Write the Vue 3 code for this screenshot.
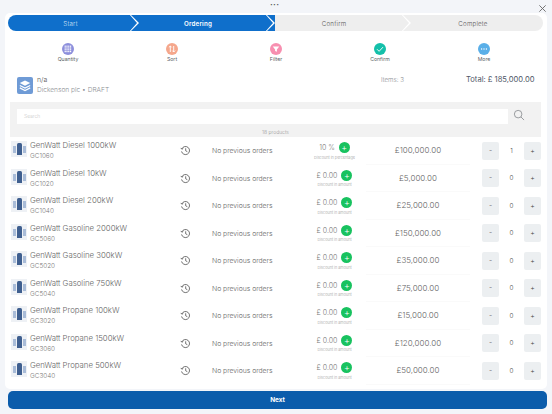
<script setup>
// --- Data ---
const steps = [
  { label: 'Start', state: 'done' },
  { label: 'Ordering', state: 'active' },
  { label: 'Confirm', state: 'todo' },
  { label: 'Complete', state: 'todo' },
]

const tools = [
  { label: 'Quantity', color: '#8d8fdc', icon: 'grid' },
  { label: 'Sort', color: '#f5a78c', icon: 'sort' },
  { label: 'Filter', color: '#f78fb0', icon: 'filter' },
  { label: 'Confirm', color: '#14c0aa', icon: 'check' },
  { label: 'More', color: '#5aafe8', icon: 'more' },
]

const products = [
  { name: 'GenWatt Diesel 1000kW', code: 'GC1060', discount: '10 %', note: 'Discount in percentage', price: '£100,000.00', qty: 1 },
  { name: 'GenWatt Diesel 10kW', code: 'GC1020', discount: '£ 0.00', note: 'Discount in amount', price: '£5,000.00', qty: 0 },
  { name: 'GenWatt Diesel 200kW', code: 'GC1040', discount: '£ 0.00', note: 'Discount in amount', price: '£25,000.00', qty: 0 },
  { name: 'GenWatt Gasoline 2000kW', code: 'GC5060', discount: '£ 0.00', note: 'Discount in amount', price: '£150,000.00', qty: 0 },
  { name: 'GenWatt Gasoline 300kW', code: 'GC5020', discount: '£ 0.00', note: 'Discount in amount', price: '£35,000.00', qty: 0 },
  { name: 'GenWatt Gasoline 750kW', code: 'GC5040', discount: '£ 0.00', note: 'Discount in amount', price: '£75,000.00', qty: 0 },
  { name: 'GenWatt Propane 100kW', code: 'GC3020', discount: '£ 0.00', note: 'Discount in amount', price: '£15,000.00', qty: 0 },
  { name: 'GenWatt Propane 1500kW', code: 'GC3060', discount: '£ 0.00', note: 'Discount in amount', price: '£120,000.00', qty: 0 },
  { name: 'GenWatt Propane 500kW', code: 'GC3040', discount: '£ 0.00', note: 'Discount in amount', price: '£50,000.00', qty: 0 },
]
</script>

<template>
  <div class="page">
    <div class="topbar">
      <span class="dots">•••</span>
      <svg class="close" viewBox="0 0 10 10"><path d="M1.5 1.5l7 7M8.5 1.5l-7 7" /></svg>
    </div>

    <div class="sheet">
      <!-- Stepper -->
      <div class="stepper">
        <div v-for="step in steps" :key="step.label" :class="['step', step.state]">
          {{ step.label }}
        </div>
      </div>

      <!-- Toolbar -->
      <div class="toolbar">
        <div v-for="tool in tools" :key="tool.label" class="tool">
          <span class="tool-icon" :style="{ background: tool.color }">
            <svg viewBox="0 0 12 12">
              <g v-if="tool.icon === 'grid'" fill="#fff">
                <rect v-for="n in 16" :key="n" :x="2.6 + ((n - 1) % 4) * 1.8" :y="2.6 + Math.floor((n - 1) / 4) * 1.8" width="1.2" height="1.2" />
              </g>
              <path v-else-if="tool.icon === 'sort'" d="M4.3 9V3M2.9 4.4l1.4-1.4 1.4 1.4M7.7 3v6M6.3 7.6l1.4 1.4 1.4-1.4" fill="none" stroke="#fff" stroke-width="0.9" />
              <path v-else-if="tool.icon === 'filter'" d="M2.8 3.6h6.4L6.9 6.4v2.4l-1.8-.8V6.4z" fill="#fff" />
              <path v-else-if="tool.icon === 'check'" d="M3 6.2l2.1 2.1L9 4.1" fill="none" stroke="#fff" stroke-width="0.9" />
              <g v-else fill="#fff">
                <circle cx="3.6" cy="6" r="0.7" />
                <circle cx="6" cy="6" r="0.7" />
                <circle cx="8.4" cy="6" r="0.7" />
              </g>
            </svg>
          </span>
          <span class="tool-label">{{ tool.label }}</span>
        </div>
      </div>

      <!-- Order header -->
      <div class="order">
        <span class="order-icon">
          <svg viewBox="0 0 16 16">
            <path d="M8 3l5.2 2.6L8 8.2 2.8 5.6z" fill="#fff" />
            <path d="M2.8 8L8 10.6 13.2 8M2.8 10.4L8 13l5.2-2.6" fill="none" stroke="#fff" stroke-width="1.2" />
          </svg>
        </span>
        <div class="order-text">
          <div class="order-name">n/a</div>
          <div class="order-sub">Dickenson plc • DRAFT</div>
        </div>
        <div class="order-items">Items: 3</div>
        <div class="order-total">Total: £ 185,000.00</div>
      </div>

      <!-- Search -->
      <div class="search-band">
        <div class="search-row">
          <div class="search-input">Search</div>
          <svg class="search-icon" viewBox="0 0 14 14">
            <circle cx="6" cy="6" r="4.4" />
            <path d="M9.3 9.3l3.6 3.6" />
          </svg>
        </div>
        <div class="count">18 products</div>
      </div>

      <!-- Products -->
      <div class="list">
        <div v-for="product in products" :key="product.code" class="row">
          <div class="thumb">
            <i class="unit side"></i>
            <i class="unit main"></i>
            <i class="unit side"></i>
          </div>
          <div class="product">
            <div class="product-name">{{ product.name }}</div>
            <div class="product-code">{{ product.code }}</div>
          </div>
          <svg class="history" viewBox="0 0 12 12">
            <path d="M2 4.2A4.4 4.4 0 1 1 1.7 7" />
            <path d="M.9 3.2L2 4.6l1.5-.8" />
            <path d="M6.2 3.6v2.7l1.8 1" />
          </svg>
          <div class="previous">No previous orders</div>
          <div class="discount">
            <div class="discount-top">
              <span class="discount-value">{{ product.discount }}</span>
              <span class="discount-add">+</span>
            </div>
            <div class="discount-note">{{ product.note }}</div>
          </div>
          <div class="price">{{ product.price }}</div>
          <div class="qty">
            <span class="qty-btn">-</span>
            <span class="qty-value">{{ product.qty }}</span>
            <span class="qty-btn">+</span>
          </div>
        </div>
      </div>
    </div>

    <button class="next">Next</button>
  </div>
</template>

<style>
html,
body {
  margin: 0;
  background: #f3f5f9;
}
</style>

<style scoped>
/* --- Page --- */
.page {
  width: 552px;
  height: 414px;
  overflow: hidden;
  background: #f3f5f9;
  font-family: Inter, 'Liberation Sans', sans-serif;
  font-weight: 300;
  color: #5b5f66;
  position: relative;
}

.topbar {
  height: 13px;
  position: relative;
}

.dots {
  position: absolute;
  left: 270px;
  top: 1px;
  font-size: 5px;
  letter-spacing: 0.3px;
  color: #555;
}

.close {
  position: absolute;
  left: 538px;
  top: 4px;
  width: 9px;
  height: 9px;
  fill: none;
  stroke: #666;
  stroke-width: 1;
}

.sheet {
  margin-left: 5px;
  width: 542px;
  height: 376px;
  background: #fff;
  border-radius: 5px;
  padding-top: 2px;
  box-sizing: border-box;
}

/* --- Stepper --- */
.stepper {
  display: flex;
  width: 535px;
  height: 16px;
  margin-left: 3px;
  border-radius: 8px;
  overflow: hidden;
}

.step {
  display: flex;
  align-items: center;
  justify-content: center;
  position: relative;
  box-sizing: border-box;
  font-size: 6.2px;
  letter-spacing: 0.2px;
  color: #555;
  background: #eeeeee;
}

.step:nth-child(1) {
  width: 131px;
  padding-right: 6px;
}

.step:nth-child(2),
.step:nth-child(3) {
  width: 136px;
  padding-right: 18px;
}

.step:nth-child(4) {
  width: 132px;
  padding-right: 8px;
}

.step.done,
.step.active {
  background: #0f6fcb;
  color: #cfe2f5;
}

.step.active {
  color: #fff;
  font-weight: 600;
}

.step:not(:last-child)::after {
  content: '';
  position: absolute;
  z-index: 1;
  right: 0;
  top: -1px;
  width: 10px;
  height: 18px;
  background: #fff;
  clip-path: polygon(0 0, 10% 0, 100% 50%, 10% 100%, 0 100%, 80% 50%);
}

/* --- Toolbar --- */
.toolbar {
  display: grid;
  grid-template-columns: repeat(5, 104px);
  margin: 12px 0 0 11px;
  height: 26px;
}

.tool {
  display: flex;
  flex-direction: column;
  align-items: center;
}

.tool-icon {
  width: 12px;
  height: 12px;
  border-radius: 50%;
  display: block;
}

.tool-icon svg {
  display: block;
  width: 12px;
  height: 12px;
}

.tool-label {
  margin-top: 1px;
  font-size: 5.2px;
  font-weight: 400;
  line-height: 6px;
}

/* --- Order header --- */
.order {
  display: flex;
  align-items: flex-start;
  height: 33px;
  padding-left: 12px;
}

.order-icon {
  width: 16px;
  height: 17px;
  margin-top: 8px;
  border-radius: 2px;
  background: #6f9bd6;
}

.order-icon svg {
  display: block;
  width: 16px;
  height: 17px;
}

.order-text {
  margin: 6px 0 0 4px;
  width: 344px;
}

.order-name {
  font-size: 7px;
  line-height: 10px;
  color: #555;
}

.order-sub {
  font-size: 6.6px;
  line-height: 10px;
  color: #8a8d92;
}

.order-items {
  margin-top: 6px;
  width: 85px;
  font-size: 6.2px;
  line-height: 10px;
  color: #8a8d92;
}

.order-total {
  margin-top: 6px;
  font-size: 7.6px;
  font-weight: 400;
  line-height: 10px;
  color: #4f5867;
}

/* --- Search --- */
.search-band {
  margin-left: 5px;
  width: 531px;
  height: 35px;
  background: #f2f2f2;
}

.search-row {
  display: flex;
  align-items: center;
  height: 25px;
  padding-left: 7px;
}

.search-input {
  width: 491px;
  height: 15px;
  margin-top: 3px;
  padding-left: 7px;
  box-sizing: border-box;
  background: #fff;
  font-size: 5px;
  line-height: 15px;
  color: #c9c9c9;
}

.search-icon {
  width: 12px;
  height: 12px;
  margin-left: 5px;
  fill: none;
  stroke: #7f8487;
  stroke-width: 0.9;
}

.count {
  text-align: center;
  font-size: 5px;
  line-height: 10px;
  color: #9a9a9a;
}

/* --- Products --- */
.list {
  margin-left: 5px;
  width: 531px;
}

.row {
  display: flex;
  align-items: center;
  height: 27.5px;
}

.thumb {
  flex: none;
  align-self: flex-start;
  width: 16px;
  height: 16px;
  margin: 4px 0 0 1px;
  background: #eef1f5;
  display: flex;
  align-items: flex-end;
  justify-content: center;
  gap: 1px;
  padding-bottom: 2px;
  box-sizing: border-box;
}

.unit {
  display: block;
  width: 3px;
  height: 7px;
  background: #a9bcd8;
  margin-bottom: 2px;
}

.unit.main {
  width: 5px;
  height: 12px;
  margin-bottom: 0;
  background: #3f5f8f;
  border-radius: 1.5px 1.5px 0 0;
}

.product {
  flex: none;
  align-self: flex-start;
  width: 150px;
  margin: 3px 0 0 3px;
}

.product-name {
  font-size: 7.8px;
  line-height: 11px;
  color: #666;
}

.product-code {
  font-size: 6.4px;
  line-height: 10px;
  color: #777;
}

.history {
  flex: none;
  width: 11px;
  height: 11px;
  fill: none;
  stroke: #555;
  stroke-width: 0.9;
}

.previous {
  flex: none;
  width: 91px;
  margin-left: 21px;
  font-size: 6.8px;
  color: #666;
}

.discount {
  flex: none;
  width: 63px;
  text-align: center;
}

.discount-top {
  display: flex;
  align-items: center;
  justify-content: center;
  gap: 4px;
  height: 12px;
}

.discount-value {
  font-size: 7px;
  color: #777;
}

.discount-add {
  width: 11px;
  height: 11px;
  border-radius: 50%;
  background: #18c25f;
  color: #fff;
  font-size: 9px;
  line-height: 11px;
  text-align: center;
}

.discount-note {
  margin-top: 1px;
  font-size: 3.8px;
  line-height: 5px;
  color: #999;
}

.price {
  flex: none;
  width: 104px;
  text-align: center;
  font-size: 8px;
  color: #666;
  height: 27.5px;
  line-height: 26px;
  border-bottom: 1px solid #fafafa;
  box-sizing: border-box;
}

.qty {
  display: flex;
  margin-left: auto;
  height: 18px;
  width: 59px;
}

.qty-btn {
  width: 17px;
  background: #eceff1;
  border-radius: 2px;
  text-align: center;
  font-size: 7px;
  line-height: 18px;
  color: #444;
}

.qty-value {
  flex: 1;
  text-align: center;
  font-size: 6.4px;
  line-height: 18px;
  color: #444;
}

/* --- Next --- */
.next {
  display: block;
  width: 539px;
  height: 18px;
  margin: 2px 0 0 8px;
  padding: 0;
  border: 0;
  border-radius: 5px;
  background: #0b5cab;
  color: #fff;
  font-family: inherit;
  font-size: 6.4px;
  font-weight: 700;
}
</style>
